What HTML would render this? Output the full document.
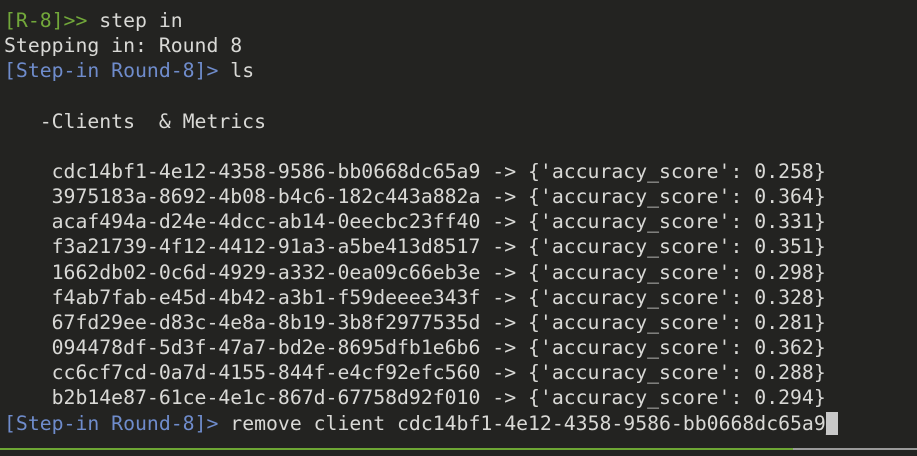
<!DOCTYPE html>
<html><head><meta charset="utf-8"><style>
html,body{margin:0;padding:0;background:#232321;width:917px;height:456px;overflow:hidden}
pre{margin:0;position:absolute;left:4px;top:8px;font-family:"DejaVu Sans Mono","Liberation Mono",monospace;font-size:19.8px;line-height:25.15px;color:#d9d9d6}
.g{color:#72a83a}.b{color:#6f8ccc}
.cur{background:#c8c8c8;color:#c8c8c8}
.l1{position:absolute;left:0;top:448px;width:793px;height:2px;background:#6da634}
.l2{position:absolute;left:793px;top:448px;width:124px;height:2px;background:#9a9a9a}
</style></head><body>
<pre><span class="g">[R-8]&gt;&gt;</span> step in
Stepping in: Round 8
<span class="b">[Step-in Round-8]&gt;</span> ls

   -Clients  &amp; Metrics

    cdc14bf1-4e12-4358-9586-bb0668dc65a9 -&gt; {'accuracy_score': 0.258}
    3975183a-8692-4b08-b4c6-182c443a882a -&gt; {'accuracy_score': 0.364}
    acaf494a-d24e-4dcc-ab14-0eecbc23ff40 -&gt; {'accuracy_score': 0.331}
    f3a21739-4f12-4412-91a3-a5be413d8517 -&gt; {'accuracy_score': 0.351}
    1662db02-0c6d-4929-a332-0ea09c66eb3e -&gt; {'accuracy_score': 0.298}
    f4ab7fab-e45d-4b42-a3b1-f59deeee343f -&gt; {'accuracy_score': 0.328}
    67fd29ee-d83c-4e8a-8b19-3b8f2977535d -&gt; {'accuracy_score': 0.281}
    094478df-5d3f-47a7-bd2e-8695dfb1e6b6 -&gt; {'accuracy_score': 0.362}
    cc6cf7cd-0a7d-4155-844f-e4cf92efc560 -&gt; {'accuracy_score': 0.288}
    b2b14e87-61ce-4e1c-867d-67758d92f010 -&gt; {'accuracy_score': 0.294}
<span class="b">[Step-in Round-8]&gt;</span> remove client cdc14bf1-4e12-4358-9586-bb0668dc65a9<span class="cur">_</span></pre>
<div class="l1"></div><div class="l2"></div>
</body></html>
